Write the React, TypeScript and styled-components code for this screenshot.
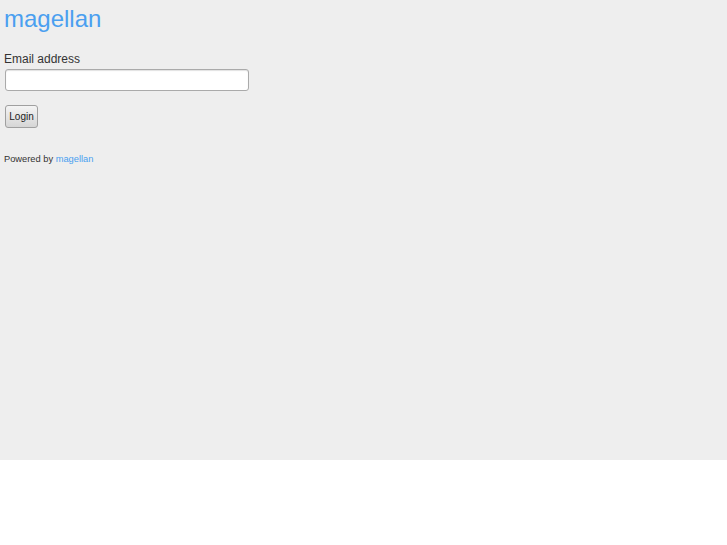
import React from 'react';
import styled, { createGlobalStyle } from 'styled-components';

const GlobalStyle = createGlobalStyle`
  html, body {
    margin: 0;
    padding: 0;
    background: #ffffff;
  }
  body {
    font-family: "Liberation Sans", Arial, sans-serif;
    color: #333333;
  }
`;

const Page = styled.div`
  background: #eeeeee;
  height: 460px;
  padding: 0 4px;
  box-sizing: border-box;
  overflow: hidden;
`;

const Brand = styled.h1`
  margin: 0;
  padding-top: 5px;
  font-size: 24px;
  font-weight: normal;
  line-height: 28px;
  color: #4a9ff0;
`;

const Form = styled.form`
  margin-top: 19px;
  display: flex;
  flex-direction: column;
  align-items: flex-start;
`;

const Label = styled.label`
  font-size: 12px;
  line-height: 14px;
  color: #333333;
`;

const Input = styled.input`
  margin: 3px 0 0 1px;
  width: 244px;
  height: 22px;
  box-sizing: border-box;
  border: 1px solid #aaaaaa;
  border-radius: 3px;
  background: #ffffff;
  box-shadow: inset 0 1px 1px rgba(0, 0, 0, 0.12);
  padding: 2px 4px;
  font-family: inherit;
`;

const Button = styled.button`
  margin: 14px 0 0 1px;
  width: 33px;
  height: 23px;
  padding: 0;
  font-family: "Liberation Sans", Arial, sans-serif;
  font-size: 10px;
  color: #222222;
  border: 1px solid #a0a0a0;
  border-radius: 3px;
  background: linear-gradient(#f4f4f4, #d6d6d6);
  cursor: pointer;
`;

const Footer = styled.p`
  margin: 26px 0 0;
  font-size: 9.3px;
  line-height: 11px;
  color: #333333;
`;

const Link = styled.a`
  color: #4a9ff0;
  text-decoration: none;
`;

export default function App() {
  return (
    <>
      <GlobalStyle />
      <Page>
        <Brand>magellan</Brand>
        <Form onSubmit={(e) => e.preventDefault()}>
          <Label htmlFor="email">Email address</Label>
          <Input id="email" type="email" />
          <Button type="submit">Login</Button>
        </Form>
        <Footer>
          Powered by <Link href="#">magellan</Link>
        </Footer>
      </Page>
    </>
  );
}
